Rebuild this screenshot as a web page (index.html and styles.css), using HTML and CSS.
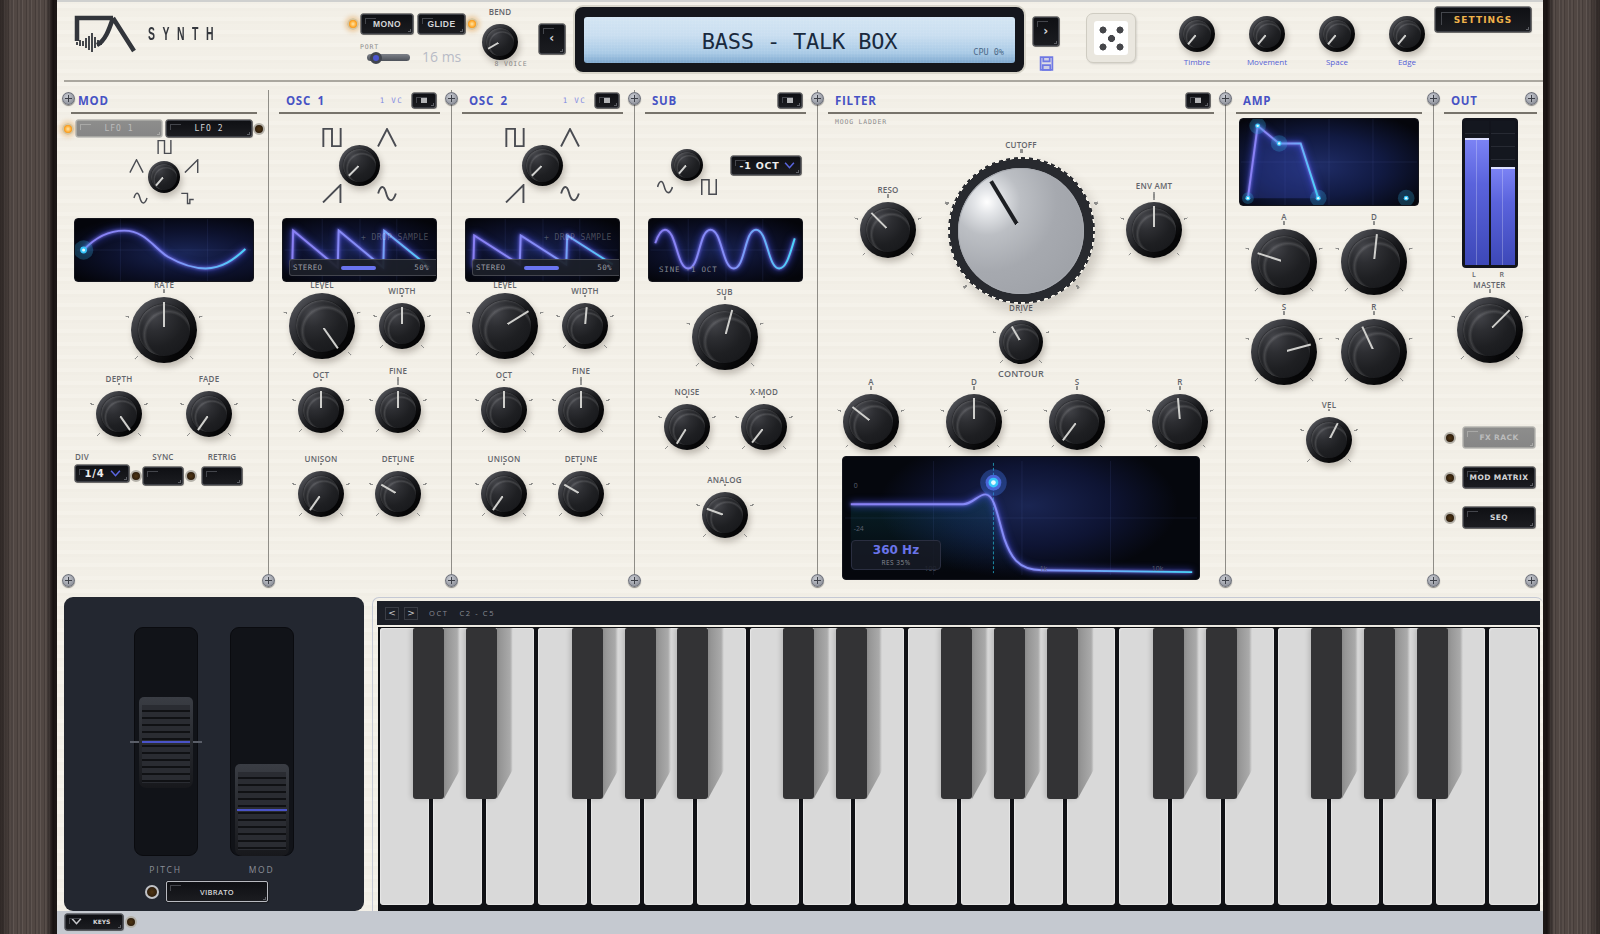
FILE: index.html
```html
<!DOCTYPE html>
<html lang="en">
<head>
    <meta charset="UTF-8">
    <title>DA Synth</title>
    <link rel="stylesheet" href="styles.css">
</head>
<body>
<svg class="defs" width="0" height="0">
    <defs>
        <linearGradient id="trace" x1="0" x2="1" y1="0" y2="0">
            <stop offset="0" stop-color="#8a80f4"/>
            <stop offset=".55" stop-color="#8490f8"/>
            <stop offset="1" stop-color="#4ad6fa"/>
        </linearGradient>
        <symbol id="w-square" viewBox="0 0 18 18"><path d="M.8 18V.8H9V17.2H17.2V0"/></symbol>
        <symbol id="w-tri" viewBox="0 0 18 18"><path d="M.5 17.5L9 1L17.5 17.5"/></symbol>
        <symbol id="w-saw" viewBox="0 0 18 18"><path d="M.5 17.5L17 1V18"/></symbol>
        <symbol id="w-sine" viewBox="0 0 18 18"><path d="M.6 9C3 1 6 1 8 8C10 16 14 19 17.4 9"/></symbol>
        <symbol id="w-sh" viewBox="0 0 18 18"><path d="M1 3H9V16H12V11H17"/></symbol>
    </defs>
</svg>

<div class="synth">
    <div class="wood"></div>

    <div class="panel">
        <!-- top bar -->
        <div class="top">
            <div class="brand">
                <svg class="logo" viewBox="0 0 61 36">
                    <path class="logo-line" d="M2 25V2H38M38 2L59 35M38 2C34 14 30 25 22 29"/>
                    <path class="logo-wave" d="M2 26v3M5 24v6M8 25v5M11 22v10M14 20v14M17 17v19M20 21v11M23 24v6M26 26v3"/>
                </svg>
                <div class="wordmark">SYNTH</div>
            </div>

            <div class="perf">
                <div class="perf-row">
                    <i class="led on"></i>
                    <div class="btn mono">MONO</div>
                    <div class="btn glide">GLIDE</div>
                    <i class="led on"></i>
                </div>
                <div class="port-row">
                    <div class="port">
                        <span class="tiny">PORT</span>
                        <div class="slider"><i></i></div>
                    </div>
                    <div class="port-val">16 ms</div>
                </div>
            </div>

            <div class="bend">
                <span class="lbl">BEND</span>
                <div class="knob plain d36" style="--a:-120deg"><i></i></div>
                <span class="tiny voice">8 VOICE</span>
            </div>

            <div class="btn step prev">‹</div>

            <div class="display">
                <div class="lcd">
                    <div class="patch">BASS - TALK BOX</div>
                    <div class="cpu">CPU 0%</div>
                </div>
            </div>

            <div class="next-col">
                <div class="btn step">›</div>
                <svg class="save" viewBox="0 0 14 14">
                    <path d="M1.5 1h11v12h-11z"/>
                    <path d="M4 1v4h6V1M3.5 8.5h7V13h-7z"/>
                </svg>
            </div>

            <div class="dice"><div class="dice-face"></div></div>

            <div class="macros">
                <div class="macro"><div class="knob plain d36" style="--a:-140deg"><i></i></div><span>Timbre</span></div>
                <div class="macro"><div class="knob plain d36" style="--a:-140deg"><i></i></div><span>Movement</span></div>
                <div class="macro"><div class="knob plain d36" style="--a:-140deg"><i></i></div><span>Space</span></div>
                <div class="macro"><div class="knob plain d36" style="--a:-140deg"><i></i></div><span>Edge</span></div>
            </div>

            <div class="btn settings">SETTINGS</div>
        </div>

        <!-- modules -->
        <div class="modules">
            <section class="module mod">
                <i class="screw edge-left"></i>
                <i class="screw bottom edge-left"></i>
                <i class="screw bottom"></i>
                <div class="head"><h2>MOD</h2></div>
                <div class="lfo-tabs">
                    <i class="led on"></i>
                    <div class="btn off lfo">LFO 1</div>
                    <div class="btn lfo">LFO 2</div>
                    <i class="led"></i>
                </div>
                <div class="lfo-sel">
                    <svg class="wave w14 c2"><use href="#w-square"/></svg>
                    <svg class="wave w14 r2 left"><use href="#w-tri"/></svg>
                    <div class="knob plain d32" style="--a:-140deg"><i></i></div>
                    <svg class="wave w14 r2 right"><use href="#w-saw"/></svg>
                    <svg class="wave w14 left-end"><use href="#w-sine"/></svg>
                    <svg class="wave w14 right-start"><use href="#w-sh"/></svg>
                </div>
                <div class="scope lfo-scope">
                    <svg viewBox="0 0 180 64">
                        <path class="grid" d="M45 0V64M90 0V64M135 0V64M0 32H180"/>
                        <path class="curve" d="M7 32C20 18 35 12 49 12C70 12 80 30 94 39C108 47 120 51 133 51C150 51 162 42 174 31"/>
                        <circle class="halo" cx="7" cy="32" r="10"/>
                        <circle class="dot" cx="7" cy="32" r="3.5"/>
                        <circle class="core" cx="7" cy="32" r="1.6"/>
                    </svg>
                </div>
                <div class="ctl rate"><span class="lbl">RATE</span><div class="knob d66" style="--a:0deg"><i></i></div></div>
                <div class="pair depth-row">
                    <div class="ctl"><span class="lbl">DEPTH</span><div class="knob" style="--a:145deg"><i></i></div></div>
                    <div class="ctl"><span class="lbl">FADE</span><div class="knob" style="--a:-145deg"><i></i></div></div>
                </div>
                <div class="sync-row">
                    <div class="div-col"><span class="lbl">DIV</span><div class="btn pick">1/4 <svg class="chev" viewBox="0 0 10 6"><path d="M1 .5L5 5L9 .5"/></svg></div></div>
                    <i class="led"></i>
                    <div class="sync-col"><span class="lbl">SYNC</span><div class="btn square"></div></div>
                    <i class="led"></i>
                    <div class="sync-col"><span class="lbl">RETRIG</span><div class="btn square"></div></div>
                </div>
            </section>

            <section class="module">
                <i class="screw"></i>
                <i class="screw bottom"></i>
                <div class="head"><h2>OSC 1</h2><span class="vc">1 VC</span><div class="btn toggle"><b></b></div></div>
                <div class="osc-sel">
                    <svg class="wave w18"><use href="#w-square"/></svg>
                    <span></span>
                    <svg class="wave w18"><use href="#w-tri"/></svg>
                    <span></span>
                    <div class="knob plain d41" style="--a:-135deg"><i></i></div>
                    <span></span>
                    <svg class="wave w18"><use href="#w-saw"/></svg>
                    <span></span>
                    <svg class="wave w18"><use href="#w-sine"/></svg>
                </div>
                <div class="scope osc-scope">
                    <svg viewBox="0 0 155 64">
                        <path class="grid" d="M39 0V64M78 0V64M116 0V64M0 32H155"/>
                        <path class="curve" d="M8 50L9 12L55 50L56 12L102 50L103 12L150 50"/>
                    </svg>
                    <span class="drop">+ DROP SAMPLE</span>
                    <div class="stereo"><span>STEREO</span><i></i><span>50%</span></div>
                </div>
                <div class="pair level-row">
                    <div class="ctl tight"><span class="lbl">LEVEL</span><div class="knob d66" style="--a:145deg"><i></i></div></div>
                    <div class="ctl width"><span class="lbl">WIDTH</span><div class="knob" style="--a:0deg"><i></i></div></div>
                </div>
                <div class="pair oct-row">
                    <div class="ctl"><span class="lbl">OCT</span><div class="knob" style="--a:0deg"><i></i></div></div>
                    <div class="ctl tall"><span class="lbl">FINE</span><div class="knob" style="--a:0deg"><i></i></div></div>
                </div>
                <div class="pair unison-row">
                    <div class="ctl"><span class="lbl">UNISON</span><div class="knob" style="--a:-145deg"><i></i></div></div>
                    <div class="ctl"><span class="lbl">DETUNE</span><div class="knob" style="--a:-60deg"><i></i></div></div>
                </div>
            </section>

            <section class="module">
                <i class="screw"></i>
                <i class="screw bottom"></i>
                <div class="head"><h2>OSC 2</h2><span class="vc">1 VC</span><div class="btn toggle"><b></b></div></div>
                <div class="osc-sel">
                    <svg class="wave w18"><use href="#w-square"/></svg>
                    <span></span>
                    <svg class="wave w18"><use href="#w-tri"/></svg>
                    <span></span>
                    <div class="knob plain d41" style="--a:-135deg"><i></i></div>
                    <span></span>
                    <svg class="wave w18"><use href="#w-saw"/></svg>
                    <span></span>
                    <svg class="wave w18"><use href="#w-sine"/></svg>
                </div>
                <div class="scope osc-scope">
                    <svg viewBox="0 0 155 64">
                        <path class="grid" d="M39 0V64M78 0V64M116 0V64M0 32H155"/>
                        <path class="curve" d="M6 50L7 17L54 47L55 17L102 47L103 17L150 47"/>
                    </svg>
                    <span class="drop">+ DROP SAMPLE</span>
                    <div class="stereo"><span>STEREO</span><i></i><span>50%</span></div>
                </div>
                <div class="pair level-row">
                    <div class="ctl tight"><span class="lbl">LEVEL</span><div class="knob d66" style="--a:58deg"><i></i></div></div>
                    <div class="ctl width"><span class="lbl">WIDTH</span><div class="knob" style="--a:5deg"><i></i></div></div>
                </div>
                <div class="pair oct-row">
                    <div class="ctl"><span class="lbl">OCT</span><div class="knob" style="--a:0deg"><i></i></div></div>
                    <div class="ctl tall"><span class="lbl">FINE</span><div class="knob" style="--a:0deg"><i></i></div></div>
                </div>
                <div class="pair unison-row">
                    <div class="ctl"><span class="lbl">UNISON</span><div class="knob" style="--a:-145deg"><i></i></div></div>
                    <div class="ctl"><span class="lbl">DETUNE</span><div class="knob" style="--a:-60deg"><i></i></div></div>
                </div>
            </section>

            <section class="module">
                <i class="screw"></i>
                <i class="screw bottom"></i>
                <div class="head"><h2>SUB</h2><div class="btn toggle"><b></b></div></div>
                <div class="sub-top">
                    <div class="sub-sel">
                        <div class="knob plain d32" style="--a:-140deg"><i></i></div>
                        <div class="sub-waves">
                            <svg class="wave w16"><use href="#w-sine"/></svg>
                            <svg class="wave w16"><use href="#w-square"/></svg>
                        </div>
                    </div>
                    <div class="btn pick sub-oct">-1 OCT <svg class="chev" viewBox="0 0 10 6"><path d="M1 .5L5 5L9 .5"/></svg></div>
                </div>
                <div class="scope osc-scope">
                    <svg viewBox="0 0 155 64">
                        <path class="grid" d="M39 0V64M78 0V64M116 0V64M0 32H155"/>
                        <path class="curve" d="M5 25C8 16 11 11 15 11C27 11 27 51 39 51S50 11 62 11S74 51 86 51S97 11 109 11S121 51 133 51C141 51 145 32 149 20"/>
                    </svg>
                    <span class="sine-tag">SINE -1 OCT</span>
                </div>
                <div class="ctl sub-knob"><span class="lbl">SUB</span><div class="knob d66" style="--a:15deg"><i></i></div></div>
                <div class="pair noise-row">
                    <div class="ctl"><span class="lbl">NOISE</span><div class="knob" style="--a:-148deg"><i></i></div></div>
                    <div class="ctl"><span class="lbl">X-MOD</span><div class="knob" style="--a:-142deg"><i></i></div></div>
                </div>
                <div class="ctl analog"><span class="lbl">ANALOG</span><div class="knob" style="--a:-70deg"><i></i></div></div>
            </section>

            <section class="module filter">
                <i class="screw"></i>
                <i class="screw bottom"></i>
                <div class="head"><h2>FILTER</h2><div class="btn toggle"><b></b></div></div>
                <div class="tiny moog">MOOG LADDER</div>
                <div class="cut-row">
                    <div class="ctl reso"><span class="lbl">RESO</span><div class="knob d56" style="--a:-45deg"><i></i></div></div>
                    <div class="ctl"><span class="lbl">CUTOFF</span><div class="knob cutoff" style="--a:-31deg"><b class="teeth"></b><i></i></div></div>
                    <div class="ctl tall env"><span class="lbl">ENV AMT</span><div class="knob d56" style="--a:0deg"><i></i></div></div>
                </div>
                <div class="ctl drive"><span class="lbl">DRIVE</span><div class="knob d44" style="--a:-30deg"><i></i></div></div>
                <div class="lbl contour">CONTOUR</div>
                <div class="adsr">
                    <div class="ctl"><span class="lbl">A</span><div class="knob d56" style="--a:-52deg"><i></i></div></div>
                    <div class="ctl"><span class="lbl">D</span><div class="knob d56" style="--a:0deg"><i></i></div></div>
                    <div class="ctl"><span class="lbl">S</span><div class="knob d56" style="--a:-143deg"><i></i></div></div>
                    <div class="ctl"><span class="lbl">R</span><div class="knob d56" style="--a:-5deg"><i></i></div></div>
                </div>
                <div class="scope filter-scope">
                    <svg viewBox="0 0 358 124">
                        <defs>
                            <linearGradient id="teal" x1="0" x2="0" y1="0" y2="1">
                                <stop offset="0" stop-color="#128a96" stop-opacity=".2"/>
                                <stop offset="1" stop-color="#128a96" stop-opacity="0"/>
                            </linearGradient>
                        </defs>
                        <path class="grid" d="M90 4V120M180 4V120M270 4V120M0 62H358"/>
                        <path fill="url(#teal)" d="M6 48H120C130 48 135 38 143 38C152 38 155 60 162 83C168 100 175 115 200 115V118H6Z"/>
                        <path class="cursor" d="M151 6V118"/>
                        <path class="curve" d="M6 48L120 48C130 48 135 38 143 38C152 38 155 60 162 83C168 100 175 115 200 115L353 117"/>
                        <circle class="halo wide" cx="151" cy="26" r="13.5"/>
                        <circle class="ring" cx="151" cy="26" r="8"/>
                        <circle class="dot" cx="151" cy="26" r="5"/>
                        <circle class="core" cx="151" cy="26" r="2.4"/>
                        <text x="9" y="31">0</text>
                        <text x="9" y="75">-24</text>
                        <text x="81" y="116">100</text>
                        <text x="198" y="116">1k</text>
                        <text x="312" y="116">10k</text>
                    </svg>
                    <div class="freq"><b>360 Hz</b><span>RES 35%</span></div>
                </div>
            </section>

            <section class="module amp">
                <i class="screw"></i>
                <i class="screw bottom"></i>
                <div class="head"><h2>AMP</h2></div>
                <div class="scope amp-scope">
                    <svg viewBox="0 0 180 88">
                        <path class="grid" d="M45 0V88M90 0V88M135 0V88M0 44H180"/>
                        <path class="amp-fill" d="M7 81L17 7L39 25H61L79 81Z"/>
                        <path class="curve" d="M7 81L17 7L39 25H61L79 81"/>
                        <circle class="halo" cx="17" cy="7" r="8.5"/><circle class="dot" cx="17" cy="7" r="2.5"/><circle class="core" cx="17" cy="7" r="1.2"/>
                        <circle class="halo" cx="39" cy="25" r="8.5"/><circle class="dot" cx="39" cy="25" r="2.5"/><circle class="core" cx="39" cy="25" r="1.2"/>
                        <circle class="halo" cx="7" cy="81" r="6"/><circle class="dot" cx="7" cy="81" r="2.5"/><circle class="core" cx="7" cy="81" r="1.2"/>
                        <circle class="halo" cx="79" cy="81" r="8.5"/><circle class="dot" cx="79" cy="81" r="2.5"/><circle class="core" cx="79" cy="81" r="1.2"/>
                        <circle class="halo" cx="169" cy="81" r="8.5"/><circle class="dot" cx="169" cy="81" r="2.5"/><circle class="core" cx="169" cy="81" r="1.2"/>
                    </svg>
                </div>
                <div class="pair amp-row">
                    <div class="ctl"><span class="lbl">A</span><div class="knob d66" style="--a:-72deg"><i></i></div></div>
                    <div class="ctl"><span class="lbl">D</span><div class="knob d66" style="--a:6deg"><i></i></div></div>
                </div>
                <div class="pair amp-row second">
                    <div class="ctl"><span class="lbl">S</span><div class="knob d66" style="--a:75deg"><i></i></div></div>
                    <div class="ctl"><span class="lbl">R</span><div class="knob d66" style="--a:-25deg"><i></i></div></div>
                </div>
                <div class="ctl vel"><span class="lbl">VEL</span><div class="knob" style="--a:27deg"><i></i></div></div>
            </section>

            <section class="module out">
                <i class="screw edge-right"></i>
                <i class="screw bottom edge-right"></i>
                <div class="head"><h2>OUT</h2></div>
                <div class="meter">
                    <div class="channel"><i style="height:88%"></i></div>
                    <div class="channel"><i style="height:68%"></i></div>
                </div>
                <div class="lr"><span>L</span><span>R</span></div>
                <div class="ctl master"><span class="lbl">MASTER</span><div class="knob d66" style="--a:45deg"><i></i></div></div>
                <div class="routes">
                    <div class="route"><i class="led"></i><div class="btn off">FX RACK</div></div>
                    <div class="route"><i class="led"></i><div class="btn">MOD MATRIX</div></div>
                    <div class="route"><i class="led"></i><div class="btn">SEQ</div></div>
                </div>
            </section>
        </div>

        <!-- wheels and keyboard -->
        <div class="lower">
            <div class="wheels">
                <div class="wheel-row">
                    <div class="wheel-col">
                        <div class="track pitch"><div class="handle"></div><i class="centre"></i></div>
                        <span>PITCH</span>
                    </div>
                    <div class="wheel-col">
                        <div class="track"><div class="handle low"></div></div>
                        <span>MOD</span>
                    </div>
                </div>
                <div class="vibrato"><i class="led dark"></i><div class="btn">VIBRATO</div></div>
            </div>

            <div class="keyboard">
                <div class="kb-bar">
                    <div class="oct-btn">&lt;</div>
                    <div class="oct-btn">&gt;</div>
                    <span>OCT</span>
                    <span>C2 - C5</span>
                </div>
                <div class="keys">
                    <div class="key sharp"></div><div class="key sharp"></div><div class="key"></div>
                    <div class="key sharp"></div><div class="key sharp"></div><div class="key sharp"></div><div class="key"></div>
                    <div class="key sharp"></div><div class="key sharp"></div><div class="key"></div>
                    <div class="key sharp"></div><div class="key sharp"></div><div class="key sharp"></div><div class="key"></div>
                    <div class="key sharp"></div><div class="key sharp"></div><div class="key"></div>
                    <div class="key sharp"></div><div class="key sharp"></div><div class="key sharp"></div><div class="key"></div>
                    <div class="key"></div>
                </div>
            </div>
        </div>

        <div class="foot">
            <div class="btn keys-btn"><svg class="chev light" viewBox="0 0 10 6"><path d="M1 .5L5 5L9 .5"/></svg><span>KEYS</span></div>
            <i class="led"></i>
        </div>
    </div>

    <div class="wood right"></div>
</div>
</body>
</html>
```

FILE: styles.css
```css
* {
    box-sizing: border-box;
}
body {
    margin: 0;
    background: #2a2422;
    font-family: "Open Sans", "Liberation Sans", sans-serif;
    overflow: hidden;
}
.defs {
    position: absolute;
}
.synth {
    display: flex;
    width: 1600px;
    height: 934px;
}
.wood {
    width: 57px;
    background:
        linear-gradient(90deg, rgba(20, 15, 14, .6) 0, rgba(20, 15, 14, 0) 12px, rgba(20, 15, 14, 0) 46px, rgba(15, 10, 10, .85) 53px, #1c1716 56px),
        repeating-linear-gradient(90deg, #574d49 0 2px, #4b423f 2px 4px, #5f5551 4px 5px, #514743 5px 8px, #453c39 8px 9px);
}
.wood.right {
    transform: scaleX(-1);
}
.panel {
    width: 1486px;
    display: flex;
    flex-direction: column;
    border-top: 2px solid #cfd0cf;
    background:
        repeating-linear-gradient(0deg, rgba(160, 150, 130, .035) 0 3px, rgba(255, 255, 255, .05) 3px 7px, rgba(160, 150, 130, .02) 7px 13px),
        #f4f1e9;
}

/* buttons and lamps */
.btn {
    position: relative;
    display: flex;
    align-items: center;
    justify-content: center;
    flex: none;
    border: 1px solid #3e4046;
    border-radius: 2px;
    background: linear-gradient(#0f1014, #1b1c20);
    box-shadow: 0 0 0 .5px #1a1b1f, 1px 1px 1px rgba(0, 0, 0, .25);
    font: bold 8.5px "Liberation Sans", sans-serif;
    letter-spacing: .4px;
    color: #d4d5d8;
}
.btn::before {
    content: "";
    position: absolute;
    left: 3px;
    top: 3px;
    width: 10px;
    height: 5px;
    border-left: 1px solid #44464c;
    border-top: 1px solid #44464c;
}
.btn::after {
    content: "";
    position: absolute;
    right: 1px;
    bottom: 1px;
    width: 2px;
    height: 2px;
    border-right: 1px solid #5c5e64;
    border-bottom: 1px solid #5c5e64;
}
.btn.off {
    background: linear-gradient(#8d8d8c, #868686);
    border-color: #a7a7a3;
    color: #bcbcbc;
    box-shadow: 0 0 0 .5px #9a9a98;
}
.btn.off::before,
.btn.off::after {
    border-color: #a9a9a7;
}
.led {
    flex: none;
    display: block;
    width: 12px;
    height: 12px;
    border-radius: 50%;
    border: 2.5px solid #b4b1a9;
    background: radial-gradient(circle, #4f3514 0, #2b1c0c 80%);
}
.led.on {
    border-color: #d7c49e;
    background: radial-gradient(circle, #ffe6a8 0, #ffa321 60%, #c96c10 100%);
    box-shadow: 0 0 4px 2px rgba(225, 150, 60, .4);
}
.led.dark {
    width: 14px;
    height: 14px;
    border: 2px solid #c0c2c6;
}
.screw {
    position: absolute;
    z-index: 2;
    right: -7px;
    top: 10px;
    width: 13px;
    height: 13px;
    border-radius: 50%;
    background:
        linear-gradient(#3d4048, #3d4048) center / 7px 1.3px no-repeat,
        linear-gradient(#3d4048, #3d4048) center / 1.3px 7px no-repeat,
        radial-gradient(circle at 40% 35%, #c8cbd2, #8a8d96 75%);
    box-shadow: 0 1px 1px rgba(0, 0, 0, .45), inset 0 0 0 1px #6c6f78;
}
.screw.bottom {
    top: 492px;
}
.screw.edge-left {
    right: auto;
    left: 5px;
}
.screw.edge-right {
    right: 5px;
}

/* top bar */
.top {
    display: flex;
    align-items: flex-start;
    height: 80px;
    margin-left: 7px;
    border-bottom: 2px solid #aaa79f;
}
.brand {
    display: flex;
    align-items: center;
    margin: 14px 0 0 11px;
}
.logo {
    width: 61px;
    height: 36px;
    overflow: visible;
}
.logo-line {
    fill: none;
    stroke: #32353b;
    stroke-width: 4.5;
}
.logo-wave {
    fill: none;
    stroke: #32353b;
    stroke-width: 1.8;
}
.wordmark {
    width: 67px;
    margin-left: 12px;
    font: bold 18px "Liberation Sans", sans-serif;
    letter-spacing: 13px;
    color: #34373d;
    white-space: nowrap;
    transform: scaleX(.58);
    transform-origin: 0 50%;
}
.perf {
    margin: 12px 0 0 132px;
}
.perf-row {
    display: flex;
    align-items: center;
}
.perf-row .led:first-child {
    margin-right: 2px;
}
.mono {
    width: 52px;
    height: 20px;
}
.glide {
    width: 47px;
    height: 20px;
    margin: 0 1px 0 5px;
}
.port-row {
    display: flex;
    align-items: flex-end;
    margin-top: 9px;
}
.port {
    width: 50px;
    margin-left: 13px;
}
.port .tiny {
    display: block;
    height: 11px;
}
.slider {
    position: relative;
    width: 43px;
    height: 7px;
    margin-left: 7px;
    border-radius: 4px;
    background: linear-gradient(#7d8189, #4d5159);
}
.slider i {
    position: absolute;
    left: 3px;
    top: -2.5px;
    width: 12px;
    height: 12px;
    border-radius: 50%;
    border: 3px solid #41454e;
    background: #4a55d0;
}
.port-val {
    margin: 0 0 -5px 12px;
    font-size: 14px;
    color: #b8bbc6;
    white-space: nowrap;
}
.bend {
    display: flex;
    flex-direction: column;
    align-items: center;
    width: 36px;
    margin: 6px 0 0 4px;
}
.bend .lbl {
    height: 8px;
    line-height: 8px;
    margin-bottom: 8px;
}
.voice {
    margin: 0 -22px 0 0;
    font-size: 5.5px;
    letter-spacing: .5px;
    white-space: nowrap;
}
.tiny {
    font: 6.5px/8px "DejaVu Sans Mono", monospace;
    letter-spacing: .8px;
    color: #8c8c8c;
}
.btn.step {
    width: 26px;
    padding-bottom: 2px;
    font: bold 12px "DejaVu Sans", sans-serif;
}
.btn.prev {
    margin: 22px 0 0 21px;
    height: 30px;
}
.display {
    width: 449px;
    height: 65px;
    margin: 5px 0 0 10px;
    padding: 10px 9px 9px;
    border-radius: 8px;
    background: #14161c;
    box-shadow: 0 0 0 2px #d8d5ca;
}
.lcd {
    position: relative;
    display: flex;
    align-items: center;
    justify-content: center;
    height: 100%;
    padding-top: 2px;
    border-radius: 3px;
    background:
        repeating-linear-gradient(0deg, rgba(255, 255, 255, .04) 0 1px, transparent 1px 3px),
        repeating-linear-gradient(90deg, rgba(255, 255, 255, .04) 0 1px, transparent 1px 3px),
        linear-gradient(#d3e5f3 0, #c9def0 40%, #a9cae6 78%, #7ea8cf 100%);
}
.patch {
    font: 22px "DejaVu Sans Mono", monospace;
    letter-spacing: -.2px;
    color: #1a2a3e;
    white-space: pre;
}
.cpu {
    position: absolute;
    right: 11px;
    bottom: 6px;
    font: 8.5px "DejaVu Sans Mono", monospace;
    color: #4d6a88;
}
.next-col {
    width: 26px;
    margin: 15px 0 0 9px;
}
.next-col .step {
    height: 29px;
}
.save {
    display: block;
    width: 15px;
    height: 15px;
    margin: 10px auto 0;
    fill: rgba(111, 121, 228, .14);
    stroke: #6f79e4;
    stroke-width: 1.6;
}
.dice {
    width: 50px;
    height: 50px;
    margin: 11px 0 0 27px;
    padding: 7px;
    border: 1px solid #cfccc2;
    border-radius: 7px;
    background: #eae7df;
    box-shadow: 1px 1px 2px rgba(0, 0, 0, .12);
}
.dice-face {
    height: 100%;
    border-radius: 3px;
    background:
        radial-gradient(circle at 9px 9px, #45464a 3.2px, transparent 3.8px),
        radial-gradient(circle at 26px 9px, #45464a 3.2px, transparent 3.8px),
        radial-gradient(circle at 17.5px 17.5px, #45464a 3.2px, transparent 3.8px),
        radial-gradient(circle at 9px 26px, #45464a 3.2px, transparent 3.8px),
        radial-gradient(circle at 26px 26px, #45464a 3.2px, transparent 3.8px),
        #fff;
}
.macros {
    display: flex;
    gap: 20px;
    margin: 14px 0 0 36px;
}
.macro {
    display: flex;
    flex-direction: column;
    align-items: center;
    width: 50px;
    font-size: 8px;
    color: #5561d6;
}
.macro span {
    margin-top: 4px;
    line-height: 12px;
}
.btn.settings {
    width: 96px;
    height: 25px;
    margin: 5px 0 0 3px;
    font: bold 9px "DejaVu Sans", sans-serif;
    letter-spacing: 1.1px;
    color: #f0b24a;
}
.btn.settings::before {
    width: 60px;
    height: 12px;
    left: 5px;
    top: 4px;
}

/* knobs */
.knob {
    position: relative;
    flex: none;
    width: 46px;
    height: 46px;
    border-radius: 50%;
    background: linear-gradient(135deg, #6a6c71 0, #404146 22%, #191a1d 52%, #060607 78%);
    box-shadow: 2px 4px 6px rgba(60, 50, 40, .28);
}
.knob::before {
    content: "";
    position: absolute;
    inset: -8px;
    border-radius: 50%;
    background: conic-gradient(from -1deg, #8e8e8c 0 2deg, transparent 0 70deg, #8e8e8c 0 72deg, transparent 0 135deg, #8e8e8c 0 137deg, transparent 0 225deg, #8e8e8c 0 227deg, transparent 0 290deg, #8e8e8c 0 292deg, transparent 0);
    -webkit-mask: radial-gradient(closest-side, transparent calc(100% - 4px), #000 calc(100% - 4px));
    mask: radial-gradient(closest-side, transparent calc(100% - 4px), #000 calc(100% - 4px));
}
.knob::after {
    content: "";
    position: absolute;
    inset: 10%;
    border-radius: 50%;
    background:
        radial-gradient(circle farthest-side at 58% 60%, transparent 68%, rgba(255, 255, 255, .13) 76%, transparent 84%),
        radial-gradient(circle at 30% 22%, #44454a 0, #2d2e32 28%, #1e1f22 58%, #141518 100%);
    box-shadow: inset 1px 1px 2px rgba(255, 255, 255, .16), 0 0 1px #000;
}
.knob i {
    position: absolute;
    z-index: 1;
    left: 50%;
    bottom: 50%;
    width: 2px;
    height: 42%;
    margin-left: -1px;
    background: linear-gradient(#cfcfcc 0 88%, transparent 88%);
    transform-origin: 50% 100%;
    transform: rotate(var(--a));
}
.knob.plain::before {
    display: none;
}
.knob.plain i {
    width: 1.5px;
    height: 37%;
    background: linear-gradient(#d2d2d0 0 92%, transparent 92%);
}
.d32 { width: 32px; height: 32px; }
.d36 { width: 36px; height: 36px; }
.d41 { width: 41px; height: 41px; }
.d44 { width: 44px; height: 44px; }
.d56 { width: 56px; height: 56px; }
.d66 { width: 66px; height: 66px; }
.cutoff {
    width: 147px;
    height: 147px;
    background: none;
    box-shadow: 5px 8px 12px rgba(60, 50, 40, .2);
}
.teeth {
    position: absolute;
    inset: 0;
    border-radius: 50%;
    background:
        radial-gradient(closest-side, #282a2f calc(100% - 2px), transparent calc(100% - 1.5px)),
        repeating-conic-gradient(#282a2f 0 3deg, transparent 3deg 6deg);
}
.cutoff::after {
    inset: 10.5px;
    background: radial-gradient(circle at 23% 27%, #fff 0, #e4e6e9 9%, #bcbfc4 25%, #a6a9af 52%, #9b9ea4 100%);
    box-shadow: inset 0 0 0 1px #a7aab0;
}
.cutoff i {
    width: 3.5px;
    height: 58px;
    margin-left: -1.75px;
    background: linear-gradient(#1c1e22 0 86%, transparent 86%);
}
.ctl {
    display: flex;
    flex-direction: column;
    align-items: center;
}
.lbl {
    display: block;
    height: 12px;
    margin-bottom: 6px;
    font-size: 8px;
    font-weight: 600;
    line-height: 12px;
    letter-spacing: .2px;
    color: #63656b;
    white-space: nowrap;
}
.tall .lbl {
    height: 22px;
    margin-bottom: 0;
}
.tall .lbl::after {
    content: "";
    display: block;
    width: 1.5px;
    height: 8px;
    margin: 0 auto;
    background: #9a9a98;
}
.tight .lbl {
    margin-bottom: 2px;
}

/* modules */
.modules {
    display: grid;
    grid-template-columns: 211px 183px 183px 183px 408px 208px 110px;
    height: 513px;
}
.module {
    position: relative;
    padding: 6px 11px 0;
}
.module::after {
    content: "";
    position: absolute;
    right: -1px;
    top: 8px;
    height: 490px;
    width: 1.5px;
    background: #8f8d87;
}
.module.out::after {
    display: none;
}
.mod {
    padding-left: 14px;
}
.out {
    padding-right: 6px;
}
.head {
    display: flex;
    align-items: center;
    justify-content: space-between;
    height: 26px;
    padding: 0 4px 0 7px;
    border-bottom: 2px solid #77736b;
}
h2 {
    margin: 0;
    font: bold 11.5px "Open Sans", sans-serif;
    letter-spacing: .7px;
    word-spacing: 3px;
    color: #4753c4;
    white-space: pre;
}
.vc {
    margin-left: auto;
    margin-right: 9px;
    font: 7.5px "DejaVu Sans Mono", monospace;
    letter-spacing: 1.3px;
    color: #8189e2;
}
.toggle {
    width: 24px;
    height: 15px;
}
.toggle b {
    display: block;
    width: 6px;
    height: 6px;
    background: #b3b4b6;
}
.wave {
    display: block;
    overflow: visible;
    fill: none;
    stroke: #4a4c52;
    stroke-width: 1.8;
}
.w14 { width: 15px; height: 14px; }
.w16 { width: 16px; height: 16px; }
.w18 { width: 20px; height: 19px; }

/* mod */
.lfo-tabs {
    display: flex;
    align-items: center;
    margin: 6px 0 0 -9px;
}
.lfo {
    width: 86px;
    height: 17px;
    font: 8px "DejaVu Sans Mono", monospace;
    letter-spacing: 1px;
}
.lfo-tabs .led:first-child {
    margin-right: 2px;
}
.lfo-tabs .lfo + .lfo {
    margin: 0 1px 0 4px;
}
.lfo-sel {
    display: grid;
    grid-template-columns: 19px 32px 19px;
    grid-template-rows: 19px 32px 14px;
    width: 70px;
    margin: 3px auto 0;
}
.lfo-sel .c2 {
    grid-column: 2;
    justify-self: center;
}
.lfo-sel .r2 {
    grid-row: 2;
}
.lfo-sel .left {
    grid-column: 1;
}
.lfo-sel .right {
    grid-column: 3;
    justify-self: end;
}
.lfo-sel .knob {
    grid-row: 2;
    grid-column: 2;
    margin-top: 2px;
}
.left-end {
    grid-row: 3;
    grid-column: 1;
    justify-self: end;
}
.right-start {
    grid-row: 3;
    grid-column: 3;
}

/* scopes */
.scope {
    position: relative;
    overflow: hidden;
    border: 1px solid #14151c;
    border-radius: 4px;
    background: radial-gradient(ellipse at 45% 50%, #17214e 0, #0c1029 48%, #04050a 90%);
}
.scope svg {
    display: block;
    width: 100%;
    height: 100%;
}
.grid {
    fill: none;
    stroke: rgba(120, 145, 230, .1);
    stroke-width: 1;
}
.curve {
    fill: none;
    stroke: url(#trace);
    stroke-width: 2;
    filter: drop-shadow(0 0 1.5px #8a80f4) drop-shadow(0 0 4px #3f4be6);
}
.halo {
    fill: rgba(50, 170, 220, .28);
}
.ring {
    fill: #4a66d8;
}
.dot {
    fill: #38c6fa;
}
.core {
    fill: #e6fbff;
}
.lfo-scope {
    width: 180px;
    height: 64px;
    margin: 13px 0 0 3px;
    background: radial-gradient(ellipse at 62% 55%, #1a2657 0, #0d122e 45%, #04050b 85%);
}
.osc-sel {
    display: grid;
    grid-template-columns: 20px 35px 20px;
    grid-template-rows: 19px 37px 18px;
    width: 75px;
    margin: 14px auto 0;
}
.osc-sel .knob {
    place-self: center;
}
.osc-scope {
    width: 155px;
    height: 64px;
    margin: 16px 0 0 3px;
}
.drop {
    position: absolute;
    left: 78px;
    top: 14px;
    font: 8px "DejaVu Sans Mono", monospace;
    letter-spacing: .4px;
    color: rgba(255, 255, 255, .26);
    white-space: nowrap;
}
.stereo {
    position: absolute;
    left: 6px;
    right: -3px;
    top: 40px;
    height: 17px;
    display: flex;
    align-items: center;
    padding: 0 9px 0 3px;
    border: 1px solid rgba(255, 255, 255, .18);
    border-radius: 3px;
    background: rgba(28, 31, 40, .92);
    font: 7.5px "DejaVu Sans Mono", monospace;
    letter-spacing: .4px;
    color: #9a9ca4;
}
.stereo i {
    width: 35px;
    height: 4px;
    margin: 0 auto 0 18px;
    border-radius: 2px;
    background: #6a74f0;
}
.sine-tag {
    position: absolute;
    left: 10px;
    top: 46px;
    font: 7.5px "DejaVu Sans Mono", monospace;
    letter-spacing: .8px;
    color: #858893;
    white-space: nowrap;
}
.pair {
    display: grid;
    grid-template-columns: 84px 70px;
}
.level-row {
    grid-template-columns: 86px 74px;
    margin-top: -3px;
}
.level-row .width {
    margin-top: 6px;
}
.oct-row {
    align-items: end;
    margin-top: 6px;
}
.unison-row {
    margin-top: 20px;
}

/* mod lower half */
.rate {
    margin: -3px 0 0;
}
.depth-row {
    grid-template-columns: 96px 84px;
    margin-top: 10px;
}
.sync-row {
    display: flex;
    margin: 14px 0 0 4px;
}
.sync-row .led {
    margin: 19px 1px 0;
}
.sync-col {
    display: flex;
    flex-direction: column;
    align-items: center;
    width: 40px;
}
.sync-col .lbl {
    margin-bottom: 4px;
}
.sync-row .led + .sync-col + .led {
    margin: 19px 2px 0;
}
.sync-row .sync-col:last-child {
    margin-left: 3px;
}
.div-col {
    width: 54px;
}
.div-col .lbl {
    margin: 0 0 2px 0;
}
.square {
    width: 40px;
    height: 18px;
}
.btn.pick {
    width: 54px;
    height: 17px;
    gap: 6px;
    padding-left: 2px;
    font: bold 10px "DejaVu Sans", sans-serif;
    letter-spacing: .8px;
    color: #eee;
}
.chev {
    width: 11px;
    height: 7px;
    fill: none;
    stroke: #5a66e0;
    stroke-width: 1.4;
}
.chev.light {
    stroke: #c9cace;
}

/* sub */
.sub-top {
    display: flex;
    margin: 35px 0 0 12px;
}
.sub-sel {
    display: flex;
    flex-direction: column;
    align-items: center;
    width: 60px;
}
.sub-waves {
    display: flex;
    justify-content: space-between;
    width: 100%;
    margin-top: -2px;
}
.btn.sub-oct {
    width: 70px;
    height: 19px;
    margin: 7px 0 0 14px;
    font-size: 9.5px;
    gap: 4px;
}
.module .sub-top + .scope {
    margin-top: 23px;
}
.sub-knob {
    margin: 4px 0 0 -2px;
}
.noise-row {
    margin-top: 16px;
}
.analog {
    margin: 24px 0 0 -2px;
}

/* filter */
.moog {
    margin: 3px 0 0 7px;
    height: 10px;
    line-height: 10px;
}
.cut-row {
    display: grid;
    grid-template-columns: 120px 146px 120px;
    margin-top: 12px;
    height: 165px;
}
.reso {
    margin-top: 45px;
}
.env {
    margin-top: 41px;
}
.drive {
    margin-top: -2px;
}
.contour {
    margin: 4px 0 0;
    font-size: 9px;
    text-align: center;
}
.adsr {
    display: flex;
    gap: 47px;
    margin: -4px 0 0 15px;
}
.filter-scope {
    width: 358px;
    height: 124px;
    margin: 6px 0 0 14px;
    background: radial-gradient(ellipse 42% 60% at 52% 40%, #1a2552 0, #0e1433 55%, rgba(8, 10, 22, 0) 100%), #05070d;
}
.filter-scope text {
    font: 7px "Open Sans", sans-serif;
    fill: #5c6070;
}
.cursor {
    fill: none;
    stroke: #1f8ea8;
    stroke-width: 1;
    stroke-dasharray: 3 2;
}
.halo.wide {
    fill: rgba(60, 110, 220, .4);
}
.freq {
    position: absolute;
    left: 8px;
    top: 83px;
    width: 90px;
    height: 30px;
    display: flex;
    flex-direction: column;
    align-items: center;
    justify-content: center;
    border: 1px solid #2a2e40;
    border-radius: 4px;
    background: rgba(24, 27, 38, .85);
}
.freq b {
    font: bold 12px/14px "DejaVu Sans", sans-serif;
    color: #6a74ea;
}
.freq span {
    margin-top: 1px;
    font-size: 6.5px;
    line-height: 9px;
    letter-spacing: .5px;
    color: #8a8d96;
}

/* amp */
.amp-scope {
    width: 180px;
    height: 88px;
    margin: 4px 0 0 3px;
    background: radial-gradient(ellipse at 45% 55%, #1f2c66 0, #111a42 45%, #05060c 88%);
}
.amp-fill {
    fill: rgba(60, 80, 200, .3);
}
.amp-row {
    grid-template-columns: 96px 84px;
    margin-top: 5px;
}
.amp-row.second {
    margin-top: 6px;
}
.vel {
    margin-top: 14px;
}

/* out */
.meter {
    display: flex;
    gap: 2px;
    width: 56px;
    height: 150px;
    margin: 4px 0 0 18px;
    padding: 3px;
    border-radius: 4px;
    background: #12141c;
}
.channel {
    flex: 1;
    display: flex;
    align-items: flex-end;
    background: repeating-linear-gradient(#14171f 0 12px, #272a33 12px 13px);
}
.channel i {
    display: block;
    position: relative;
    width: 100%;
    border-top: 2px solid #dfe2ff;
    background:
        linear-gradient(90deg, transparent 11px, rgba(255, 255, 255, .25) 11px 12px, transparent 12px),
        linear-gradient(#7b82f4, #5a63dc 35%, #3d48b8 100%);
}
.lr {
    display: flex;
    justify-content: space-between;
    width: 32px;
    height: 11px;
    margin: 1px 0 0 28px;
    font-size: 7px;
    font-weight: 600;
    line-height: 11px;
    color: #63656b;
}
.master {
    margin: -1px 0 0 -2px;
}
.routes {
    display: flex;
    flex-direction: column;
    gap: 19px;
    margin-top: 64px;
}
.route {
    display: flex;
    align-items: center;
    gap: 7px;
}
.route .btn {
    width: 72px;
    height: 21px;
    font: bold 7.5px "DejaVu Sans", sans-serif;
}

/* wheels */
.lower {
    display: flex;
    gap: 8px;
    height: 316px;
    padding: 2px 0 0 7px;
}
.wheels {
    width: 300px;
    height: 314px;
    padding-top: 30px;
    border-radius: 9px;
    background: #232730;
}
.wheel-row {
    display: flex;
    justify-content: center;
    gap: 32px;
    margin-left: -1px;
}
.wheel-col {
    display: flex;
    flex-direction: column;
    align-items: center;
    font-size: 8.5px;
    letter-spacing: 1.7px;
    color: #8b8f98;
}
.wheel-col span {
    margin-top: 8px;
    line-height: 12px;
}
.track {
    position: relative;
    width: 64px;
    height: 229px;
    padding: 69px 4px 0;
    border: 1px solid #0a0b0f;
    border-radius: 9px;
    background: #111318;
}
.track:not(.pitch) {
    padding-top: 136px;
}
.handle {
    position: relative;
    height: 91px;
    border-radius: 5px 5px 7px 7px;
    background:
        repeating-linear-gradient(#2a2c32 0 5.5px, #101114 5.5px 7px) 3px 8px / 48px 78px no-repeat,
        linear-gradient(#3a3d44, #24262b 60%, #17181c);
}
.handle.low {
    height: 92px;
}
.handle.low::after {
    content: "";
    position: absolute;
    left: 2px;
    right: 2px;
    top: 45px;
    height: 2px;
    background: #4a53c8;
}
.pitch .centre {
    position: absolute;
    left: -5px;
    top: 113px;
    width: 72px;
    height: 2px;
    background: linear-gradient(90deg, #5a5e68 0 9px, transparent 9px 12px, #4a53c8 12px 60px, transparent 60px 63px, #5a5e68 63px);
}
.vibrato {
    display: flex;
    align-items: center;
    gap: 7px;
    margin: 5px 0 0 81px;
}
.vibrato .btn {
    width: 102px;
    height: 21px;
    border: 1px solid #b8bac0;
    font: 600 7.5px "Open Sans", sans-serif;
    letter-spacing: .3px;
}

/* keyboard */
.keyboard {
    flex: 1;
    padding: 3px 3px 0 4px;
    border-left: 1px solid #c4c8d4;
    border-top: 1px solid #c4c8d4;
    border-top-left-radius: 7px;
    border-top-right-radius: 7px;
}
.kb-bar {
    display: flex;
    align-items: center;
    height: 24px;
    padding-left: 8px;
    background: #1c1f27;
    font: 7.5px "Open Sans", sans-serif;
    letter-spacing: 1.6px;
    color: #888b94;
}
.kb-bar span {
    margin-left: 6px;
}
.kb-bar span + span {
    margin-left: 11px;
}
.oct-btn {
    width: 14px;
    height: 13px;
    margin-right: 5px;
    border: 1px solid #3a3d45;
    font: 9px/11px "DejaVu Sans", sans-serif;
    letter-spacing: 0;
    color: #c8c9cc;
    text-align: center;
}
.keys {
    display: flex;
    gap: 4px;
    height: 284px;
    margin: 2px 0 0 1px;
    padding: 1px 2px 6px;
    background: #101115;
}
.key {
    position: relative;
    flex: 1;
    border-radius: 3px 3px 4px 4px;
    background: #d9d9d9;
    box-shadow: inset 1px 1px 1px #e6e6e6, inset -1px -1px 1px #e6e6e6;
}
.key.sharp::after {
    content: "";
    position: absolute;
    z-index: 1;
    top: 0;
    right: -15.5px;
    width: 31px;
    height: 171px;
    border-radius: 2px 2px 3px 3px;
    background: #333335;
    box-shadow: -2px 0 5px rgba(0, 0, 0, .16);
}
.key.sharp::before {
    content: "";
    position: absolute;
    z-index: 1;
    top: 0;
    right: -31px;
    width: 16px;
    height: 171px;
    background: linear-gradient(90deg, #8f8f8f, #aaaaaa 82%, #d9d9d9);
    clip-path: polygon(0 0, 100% 0, 100% 83%, 0 100%);
}

/* footer */
.foot {
    flex: 1;
    display: flex;
    align-items: center;
    gap: 2px;
    padding: 0 0 2px 8px;
    background: #c5c9d0;
}
.btn.keys-btn {
    justify-content: flex-start;
    gap: 11px;
    width: 58px;
    height: 16px;
    padding-left: 5px;
    font: bold 6px "DejaVu Sans", sans-serif;
    letter-spacing: 0;
}
.keys-btn .chev {
    width: 11px;
    height: 7px;
}
```
